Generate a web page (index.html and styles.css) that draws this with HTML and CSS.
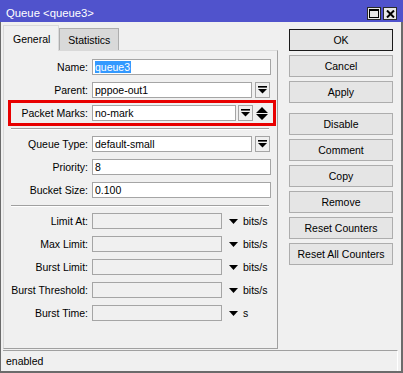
FILE: index.html
```html
<!DOCTYPE html>
<html>
<head>
<meta charset="utf-8">
<link rel="stylesheet" href="styles.css">
</head>
<body>
<div class="window">
  <div class="titlebar">
    <span class="title">Queue &lt;queue3&gt;</span>
    <div class="tb-btns">
      <span class="tb-btn"><svg width="10" height="9" viewBox="0 0 10 9"><rect x="0.5" y="0.5" width="9" height="8" fill="none" stroke="#000"/><rect x="0" y="0" width="10" height="2" fill="#000"/></svg></span>
      <span class="tb-btn"><svg width="9" height="8" viewBox="0 0 9 8"><path d="M1 0.5 L8 7.5 M8 0.5 L1 7.5" stroke="#000" stroke-width="2"/></svg></span>
    </div>
  </div>
  <div class="frame">
    <div class="main">
      <div class="left">
        <div class="tabs">
          <div class="tab active">General</div>
          <div class="tab">Statistics</div>
        </div>
        <div class="panel">
          <div class="form">
            <div class="row">
              <span class="label">Name:</span>
              <div class="field"><div class="input"><span class="sel">queue3</span></div></div>
            </div>
            <div class="row">
              <span class="label">Parent:</span>
              <div class="field"><div class="input">pppoe-out1</div><span class="dd"><svg width="9" height="8" viewBox="0 0 9 8"><rect x="0" y="0" width="9" height="1.6" fill="#000"/><path d="M0 3 H9 L4.5 7.5 Z" fill="#000"/></svg></span></div>
            </div>
            <div class="row marked">
              <span class="label">Packet Marks:</span>
              <div class="field"><div class="input">no-mark</div><span class="dd dd-tight"><svg width="9" height="8" viewBox="0 0 9 8"><rect x="0" y="0" width="9" height="1.6" fill="#000"/><path d="M0 3 H9 L4.5 7.5 Z" fill="#000"/></svg></span><span class="updown"><svg width="12" height="13" viewBox="0 0 12 13"><path d="M6 0 L12 6 H0 Z M0 7 H12 L6 13 Z" fill="#000"/></svg></span></div>
            </div>
            <div class="sep"></div>
            <div class="row">
              <span class="label">Queue Type:</span>
              <div class="field"><div class="input">default-small</div><span class="dd"><svg width="9" height="8" viewBox="0 0 9 8"><rect x="0" y="0" width="9" height="1.6" fill="#000"/><path d="M0 3 H9 L4.5 7.5 Z" fill="#000"/></svg></span></div>
            </div>
            <div class="row">
              <span class="label">Priority:</span>
              <div class="field"><div class="input">8</div></div>
            </div>
            <div class="row">
              <span class="label">Bucket Size:</span>
              <div class="field"><div class="input">0.100</div></div>
            </div>
            <div class="sep"></div>
            <div class="row">
              <span class="label">Limit At:</span>
              <div class="field"><div class="input disabled"></div><svg class="tri" width="9" height="5" viewBox="0 0 9 5"><path d="M0 0 H9 L4.5 5 Z" fill="#000"/></svg><span class="unit">bits/s</span></div>
            </div>
            <div class="row">
              <span class="label">Max Limit:</span>
              <div class="field"><div class="input disabled"></div><svg class="tri" width="9" height="5" viewBox="0 0 9 5"><path d="M0 0 H9 L4.5 5 Z" fill="#000"/></svg><span class="unit">bits/s</span></div>
            </div>
            <div class="row">
              <span class="label">Burst Limit:</span>
              <div class="field"><div class="input disabled"></div><svg class="tri" width="9" height="5" viewBox="0 0 9 5"><path d="M0 0 H9 L4.5 5 Z" fill="#000"/></svg><span class="unit">bits/s</span></div>
            </div>
            <div class="row">
              <span class="label">Burst Threshold:</span>
              <div class="field"><div class="input disabled"></div><svg class="tri" width="9" height="5" viewBox="0 0 9 5"><path d="M0 0 H9 L4.5 5 Z" fill="#000"/></svg><span class="unit">bits/s</span></div>
            </div>
            <div class="row">
              <span class="label">Burst Time:</span>
              <div class="field"><div class="input disabled"></div><svg class="tri" width="9" height="5" viewBox="0 0 9 5"><path d="M0 0 H9 L4.5 5 Z" fill="#000"/></svg><span class="unit">s</span></div>
            </div>
          </div>
        </div>
      </div>
      <div class="side">
        <div class="btn default">OK</div>
        <div class="btn">Cancel</div>
        <div class="btn">Apply</div>
        <div class="btn spaced">Disable</div>
        <div class="btn">Comment</div>
        <div class="btn">Copy</div>
        <div class="btn">Remove</div>
        <div class="btn">Reset Counters</div>
        <div class="btn">Reset All Counters</div>
      </div>
    </div>
    <div class="status">enabled</div>
  </div>
</div>
</body>
</html>
```
FILE: styles.css
```css
html, body {
  margin: 0;
  padding: 0;
  background: #f0f0f0;
}
.window {
  width: 403px;
  height: 373px;
  display: flex;
  flex-direction: column;
  font-family: "Liberation Sans", Arial, sans-serif;
  font-size: 10.5px;
  color: #000;
  background: #f0f0f0;
}
.titlebar {
  height: 22px;
  box-sizing: border-box;
  padding: 5px 6px 0 6px;
  background: #5053cc;
  display: flex;
  align-items: center;
  justify-content: space-between;
}
.title {
  color: #fff;
  font-size: 11.3px;
  line-height: 13px;
}
.tb-btns {
  display: flex;
  gap: 2px;
}
.tb-btn {
  width: 14px;
  height: 13px;
  box-sizing: border-box;
  border: 1px solid #2a2a2a;
  background: #e8e8e8;
  display: flex;
  align-items: center;
  justify-content: center;
}
.frame {
  flex: 1;
  display: flex;
  flex-direction: column;
  box-sizing: border-box;
  padding: 3px 0 0 2px;
  border-left: 1px solid #6b6b6b;
  border-right: 2px solid #6b6b6b;
  border-bottom: 2px solid #6b6b6b;
}
.main {
  flex: 1;
  display: flex;
}
.left {
  width: 275px;
  display: flex;
  flex-direction: column;
}
.tabs {
  display: flex;
  align-items: flex-end;
  height: 25px;
  position: relative;
  z-index: 1;
}
.tab {
  box-sizing: border-box;
  height: 22px;
  padding: 0 8px;
  display: flex;
  align-items: center;
  background: #d9d9d9;
  border: 1px solid #adadad;
  border-bottom: none;
}
.tab.active {
  height: 26px;
  margin-bottom: -1px;
  background: #f0f0f0;
  border-color: #d9d9d9;
  padding: 0 8px 0 9px;
}
.panel {
  flex: 1;
  box-sizing: border-box;
  border: 1px solid #d9d9d9;
  border-right-color: #a0a0a0;
  border-bottom-color: #a0a0a0;
  padding: 8px 6px 0 6px;
}
.form {
  display: flex;
  flex-direction: column;
  gap: 7px;
}
.row {
  display: grid;
  grid-template-columns: 78px 1fr;
  column-gap: 4px;
  height: 16px;
  align-items: center;
}
.row.marked {
  grid-template-columns: 75px 1fr;
  margin-left: 3px;
  outline: 3px solid #e80000;
  outline-offset: 2px;
}
.label {
  text-align: right;
  white-space: nowrap;
}
.field {
  display: flex;
  align-items: center;
  height: 16px;
}
.input {
  flex: 1;
  height: 16px;
  box-sizing: border-box;
  border: 1px solid #a5a5a5;
  background: #fff;
  padding: 0 2px;
  line-height: 14px;
  white-space: nowrap;
}
.input.disabled {
  flex: none;
  width: 130px;
  background: #f0f0f0;
}
.sel {
  background: #3399ff;
  color: #fff;
  display: inline-block;
  padding: 0 1px 0 0;
  line-height: 12px;
}
.dd {
  width: 15px;
  height: 16px;
  box-sizing: border-box;
  border: 1px solid #a5a5a5;
  background: #f0f0f0;
  margin-left: 3px;
  margin-right: 1px;
  display: flex;
  align-items: center;
  justify-content: center;
}
.dd-tight {
  margin-left: 2px;
  margin-right: 0;
}
.updown {
  display: flex;
  margin: 0 3px 0 3px;
}
.tri {
  margin-left: 7px;
}
.unit {
  margin-left: 5px;
}
.sep {
  height: 1px;
  border-top: 1px solid #a0a0a0;
  background: #fff;
  margin: 0 2px 0 1px;
}
.sep + .row {
  margin-top: -1px;
}
.side {
  margin-left: 11px;
  width: 104px;
  padding-top: 4px;
  display: flex;
  flex-direction: column;
  gap: 4px;
}
.btn {
  height: 22px;
  box-sizing: border-box;
  border: 1px solid #adadad;
  background: #e5e5e5;
  display: flex;
  align-items: center;
  justify-content: center;
  white-space: nowrap;
}
.btn.default {
  border-color: #1a1a1a;
}
.btn.spaced {
  margin-top: 6px;
}
.status {
  margin-top: 1px;
  height: 21px;
  box-sizing: border-box;
  margin-right: 3px;
  border-top: 1px solid #a0a0a0;
  border-right: 1px solid #fff;
  padding: 0 0 0 3px;
  display: flex;
  align-items: center;
}
```
